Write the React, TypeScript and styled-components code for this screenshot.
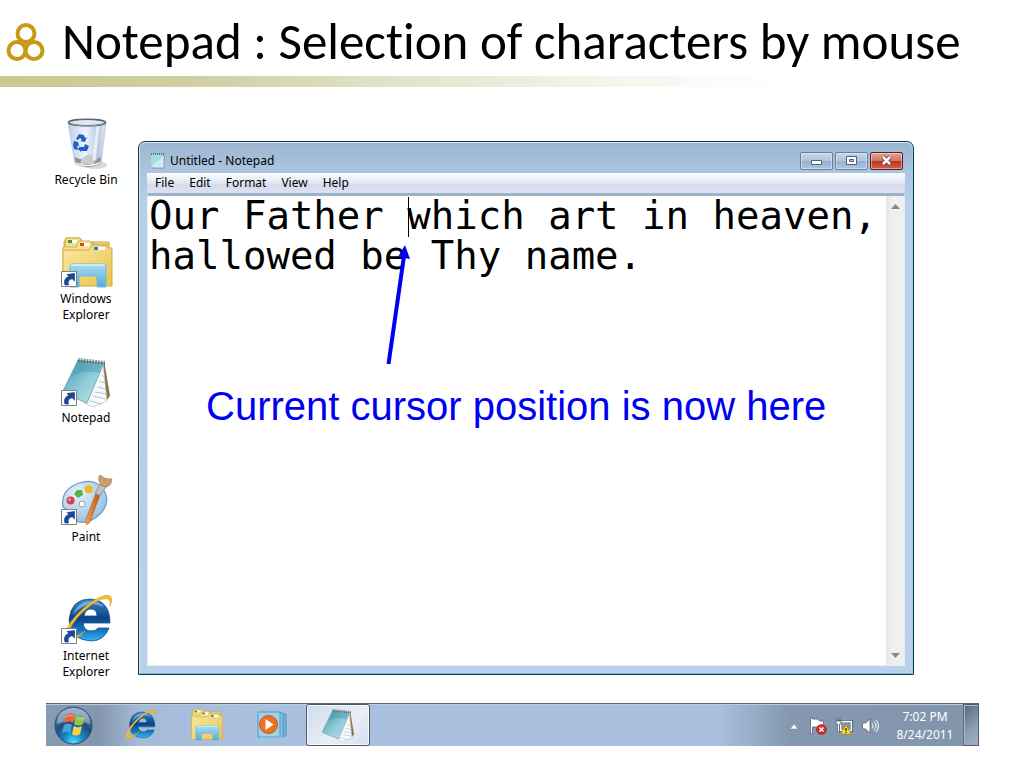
import React from "react";
import styled, { createGlobalStyle, css } from "styled-components";

const GlobalStyle = createGlobalStyle`
  *, *::before, *::after { box-sizing: border-box; }
  body { margin: 0; background: #fff; color: #000; font-family: "Noto Sans", "Open Sans", sans-serif; font-size: 12px; line-height: 16px; }
  button, textarea { font: inherit; color: inherit; margin: 0; }
  svg { display: block; flex: none; }
`;

const Slide = styled.main`
  display: flex;
  flex-direction: column;
`;

const Header = styled.header`
  display: flex;
  align-items: center;
  height: 76px;
  padding: 8px 6px 0;
  gap: 16px;
`;

const Title = styled.h1`
  margin: 0;
  font-family: Carlito, Calibri, "Noto Sans", sans-serif;
  font-size: 51px;
  line-height: 56px;
  font-weight: 400;
  font-variant-ligatures: none;
  white-space: nowrap;
`;

const Rule = styled.div`
  height: 11px;
  background: linear-gradient(90deg, #c9c88f 0%, #d0d0a4 20%, #e6e6d0 42%, #f7f7f0 62%, #fff 77%);
`;

const Desktop = styled.section`
  display: grid;
  grid-template-columns: 80px 1fr;
  column-gap: 12px;
  align-items: start;
  padding: 30px 110px 24px 46px;
`;

const Shortcuts = styled.nav`
  display: grid;
  grid-auto-rows: 119px;
  height: 562px;
`;

const Shortcut = styled.a`
  display: flex;
  flex-direction: column;
  align-items: center;
  gap: 1px;
  color: #000;
  text-align: center;
  text-decoration: none;
  span { max-width: 70px; }
`;

const Window = styled.section`
  position: relative;
  margin-top: 24px;
  padding: 0 8px 8px;
  border: 1px solid #143a48;
  border-radius: 7px 7px 0 0;
  background: linear-gradient(180deg, #9bb4d0 0, #aac3df 26px, #b5d0ea 60px, #b9d1ea 100%);
  box-shadow: inset 0 1px #dbe7f3, inset 1px 0 #c3e2f2, inset -1px 0 #8fd5e4, inset 0 -1px #70bfd2;
`;

const TitleBar = styled.div`
  display: flex;
  align-items: center;
  height: 31px;
  padding: 6px 2px 0 3px;
`;

const WindowName = styled.h2`
  flex: 1;
  margin: 0 0 0 4px;
  font-size: 12px;
  line-height: 16px;
  font-weight: 400;
`;

const Controls = styled.div`
  display: flex;
  gap: 2px;
`;

const Control = styled.button<{ $close?: boolean }>`
  display: flex;
  align-items: center;
  justify-content: center;
  width: 33px;
  height: 18px;
  padding: 0;
  border: 1px solid ${(p) => (p.$close ? "#5c1f24" : "#6a7f9a")};
  border-radius: 2px;
  box-shadow: inset 0 0 0 1px rgba(255, 255, 255, 0.4);
  background: ${(p) =>
    p.$close
      ? "linear-gradient(180deg, #e3a597 0%, #d2735f 48%, #b8331d 50%, #d0624a 100%)"
      : "linear-gradient(180deg, #c3d5e9 0%, #b0c6df 48%, #96b0cf 50%, #adc4de 100%)"};
`;

const MenuBar = styled.div`
  display: flex;
  height: 20px;
  padding: 0 1px;
  background: linear-gradient(180deg, #fbfcfe 0%, #e6e9f5 45%, #d6dbec 60%, #dde2f1 100%);
`;

const MenuItem = styled.button`
  padding: 0 8px 0 7px;
  border: 0;
  background: none;
  line-height: 20px;
`;

const Editor = styled.div`
  position: relative;
  display: flex;
  height: 473px;
  border: 1px solid #e8eef6;
  border-top: 3px solid #9db1c9;
  background: #fff;
`;

const Page = styled.textarea`
  flex: 1;
  min-width: 0;
  padding: 0 0 0 1px;
  border: 0;
  outline: 0;
  resize: none;
  overflow: hidden;
  background: none;
  font-family: "DejaVu Sans Mono", monospace;
  font-size: 39px;
  line-height: 40px;
`;

const ScrollTrack = styled.div`
  display: flex;
  flex-direction: column;
  justify-content: space-between;
  width: 18px;
  background: linear-gradient(90deg, #e6e6e6, #f0f0f0 40%, #efefef);
`;

const ScrollButton = styled.button`
  display: flex;
  align-items: center;
  justify-content: center;
  height: 20px;
  padding: 0;
  border: 0;
  background: none;
`;

const Caret = styled.i`
  position: absolute;
  left: 260px;
  top: 1px;
  width: 1px;
  height: 40px;
  background: #000;
`;

const Arrow = styled.svg`
  position: absolute;
  left: 230px;
  top: 47px;
`;

const Note = styled.p`
  position: absolute;
  left: 58px;
  top: 186px;
  margin: 0;
  color: #0000f0;
  font-family: "Liberation Sans", Arial, sans-serif;
  font-size: 40px;
  line-height: 48px;
  white-space: nowrap;
`;

const Taskbar = styled.footer`
  display: flex;
  align-items: stretch;
  height: 43px;
  margin: 0 45px 22px 46px;
  padding-left: 7px;
  border-top: 1px solid #596879;
  box-shadow: inset 0 1px #b9cbe0;
  background: linear-gradient(90deg, #899bb3 0, #8496af 54px, #a4bbd8 92px, #a9c1df 200px, #a9c1df calc(100% - 262px), #8598b0 calc(100% - 190px), #8195ac 100%);
`;

const pressed = css`
  border: 1px solid #4d5867;
  border-radius: 3px;
  box-shadow: inset 0 0 0 1px rgba(255, 255, 255, 0.8);
  background: linear-gradient(135deg, #d0dceb, #e9eef6 60%, #d4dfed);
`;

const TaskButton = styled.button<{ $active?: boolean }>`
  display: flex;
  align-items: center;
  justify-content: center;
  width: 64px;
  margin-right: 2px;
  padding: 0;
  border: 0;
  background: none;
  ${(p) => p.$active && pressed}
`;

const StartButton = styled.button`
  display: flex;
  align-items: center;
  width: 55px;
  padding: 0;
  border: 0;
  background: none;
`;

const Tray = styled.div`
  display: flex;
  align-items: center;
  gap: 8px;
  margin-left: auto;
  padding-top: 2px;
  color: #fff;
`;

const TrayButton = styled.button`
  padding: 0;
  border: 0;
  background: none;
`;

const Clock = styled.time`
  width: 74px;
  margin: 0 1px 0 1px;
  line-height: 18px;
  text-align: center;
`;

const ShowDesktop = styled.button`
  width: 16px;
  padding: 0;
  border: 1px solid #4e5d70;
  border-left-color: #5c6c80;
  box-shadow: inset 1px 1px #a8b7c8;
  background: linear-gradient(135deg, #57677a, #8d9fb4 60%, #a4b4c6);
`;

const ShortcutBadge = () => (
  <g transform="translate(5 35)">
    <path d="M.5.5h15v15H.5z" fill="#fff" stroke="#7d8186" />
    <path d="M4 14C2.500 9.500 4.500 6.500 8 5.500L6 3.500 13.500 2.500V10l-2.300-2.200C8 8.500 6.500 10.500 7.500 14z" fill="#17489c" stroke="#0d2f74" strokeWidth=".6" />
  </g>
);

const RecycleArt = () => (
  <>
    <defs>
      <linearGradient id="bin" x1="0" x2="1">
        <stop offset="0" stopColor="#b9cfe8" />
        <stop offset=".45" stopColor="#edf5fd" />
        <stop offset=".8" stopColor="#b7c9df" />
        <stop offset="1" stopColor="#e4ebf4" />
      </linearGradient>
    </defs>
    <ellipse cx="39" cy="48" rx="12" ry="4" fill="#c9c9c9" opacity=".7" />
    <path d="M12 5h38l-5 42q-13 6-26 0z" fill="url(#bin)" stroke="#b3bfcd" strokeWidth=".7" />
    <path d="M18.500 40q12 6 26.500 0l-1 7q-12 6-24.500 0z" fill="#8d939a" />
    <path d="M26 41l7-4 9 4-5 6H24z" fill="#c9cdd2" />
    <path d="M19 46q12 5 25 0" fill="none" stroke="#f1f1f1" strokeWidth="1.500" />
    <path d="M42 9l-4 34" stroke="#fff" strokeWidth="3" opacity=".65" />
    <ellipse cx="31" cy="5.500" rx="18.500" ry="3.200" fill="#dfe8f1" stroke="#59656f" strokeWidth="1.500" />
    <path d="M15 7q16 4 32 0" fill="none" stroke="#8d9aa5" />
    <g fill="#245fc3">
      <path d="M20 22l3-5 5 1 1 3 2-1-2 5-5-1 2-1-2-2-2 2z" />
      <path d="M18 24l4 1 1 4-2 0 1 4-4-1-1-4z" />
      <path d="M23 30l5 0 1-3 4 2-2 5-6 0v1l-3-3 2-3z" />
    </g>
  </>
);

const FolderArt = ({ badge }: { badge?: boolean }) => (
  <>
    <defs>
      <linearGradient id={badge ? "fold" : "foldS"} x1="0" y1="0" x2="1" y2="1">
        <stop offset="0" stopColor="#faeaa0" />
        <stop offset="1" stopColor="#e6c44e" />
      </linearGradient>
      <linearGradient id={badge ? "tray" : "trayS"} x1="0" y1="0" x2="0" y2="1">
        <stop offset="0" stopColor="#a9dcf2" />
        <stop offset="1" stopColor="#54add8" />
      </linearGradient>
    </defs>
    <path d="M8 46V6l2-4h14l3 4h26v38z" fill="#eed57b" stroke="#cba94a" />
    <path d="M9 10l1-8h14l2 5h11l2 5h14v34H9z" fill="#f5e08d" stroke="#c8a449" strokeWidth=".8" />
    <path d="M12 4h9v3h-9z" fill="#fff" /><path d="M12 4h4v3h-4z" fill="#3d9b3c" />
    <path d="M7 11h14V7l2-2h11l3 4h16v37H7z" fill="#f7e390" stroke="#c8a449" strokeWidth=".8" />
    <path d="M24 7h9v3h-9z" fill="#fff" /><path d="M24 7h4v3h-4z" fill="#cf4535" />
    <path d="M7 14h26l3-5h14l2 3h4v38H7z" fill={`url(#${badge ? "fold" : "foldS"})`} stroke="#cfa943" />
    <path d="M38 11h11v3H38z" fill="#fff" /><path d="M38 11h4v3h-4z" fill="#3479bb" />
    <path d="M14 30q0-2 2-2h32q2 0 2 2v21h-9V40H23v11h-9z" fill={`url(#${badge ? "tray" : "trayS"})`} stroke="#72b8d8" />
    <path d="M15 29h34" stroke="#d8f3ff" strokeWidth="2" opacity=".8" />
  </>
);

const NotepadArt = ({ id }: { id: string }) => (
  <>
    <defs>
      <linearGradient id={id} x1="0" y1="0" x2="1" y2="1">
        <stop offset="0" stopColor="#4597ab" />
        <stop offset=".55" stopColor="#8fcdd8" />
        <stop offset="1" stopColor="#c4e5ea" />
      </linearGradient>
    </defs>
    <path d="M48 5l6 36-4 5-6-9z" fill="#8b7141" />
    <path d="M47 8l4 38-14 6-9-4z" fill="#f8fafb" stroke="#b7bfc5" strokeWidth=".7" />
    <path d="M46 20l2 2m-5 4 6 2m-8 4 9 2m-11 3 11 2m-13 2 13 3m-16 2 12 3" stroke="#a4b4c2" strokeWidth=".8" />
    <path d="M22 5l26 3L31 48 6 38z" fill={`url(#${id})`} stroke="#6f9faa" strokeWidth=".8" />
    <path d="M22 7l24 3-3 8Q27 14 15 22z" fill="#3d8fa7" opacity=".4" />
    <path d="M22 5l27 3" stroke="#555e60" strokeWidth="4" strokeDasharray="1.500 1.400" />
    <path d="M22 4l27 3" stroke="#bdc5c6" strokeWidth="1" />
  </>
);

const PaintArt = () => (
  <>
    <defs>
      <radialGradient id="palette" cx=".35" cy=".3" r=".8">
        <stop offset="0" stopColor="#e5f2fc" />
        <stop offset="1" stopColor="#91badf" />
      </radialGradient>
      <linearGradient id="handle" x1="0" x2="1">
        <stop offset="0" stopColor="#f4a04e" />
        <stop offset="1" stopColor="#b95517" />
      </linearGradient>
    </defs>
    <path d="M7 33Q4 16 23 9q16-5 24 6 9 13-3 25-10 10-22 8-3-9-15-15z" fill="url(#palette)" stroke="#6f9ac2" strokeWidth="1.200" />
    <circle cx="26" cy="30" r="3" fill="#fff" stroke="#8aa7c0" />
    <circle cx="14.500" cy="26.500" r="4" fill="#cf4248" /><circle cx="13.500" cy="25.500" r="1.500" fill="#f29a99" />
    <path d="M18 20l3-4 5 0 1 5-5 3z" fill="#58b246" />
    <path d="M28 13l4-2 5 2-1 6-6 0z" fill="#f0b72c" />
    <path d="M40 19l4 2L34 48q-3 4-4 2-1-4 1-8z" fill="url(#handle)" stroke="#b3651f" strokeWidth=".5" />
    <path d="M44 10l6 3-6 9-5-3z" fill="#b9c0c7" stroke="#7f868c" strokeWidth=".7" />
    <path d="M45 11Q41 5 44 1q5 5 12 4-1 8-7 8z" fill="#c69c6d" stroke="#a67b4c" strokeWidth=".7" />
    <path d="M46 10l0-6m2 7 4-4" stroke="#dbb98a" strokeWidth=".8" />
  </>
);

const ExplorerArt = ({ id }: { id: string }) => (
  <>
    <defs>
      <linearGradient id={id} x1="0" y1="0" x2="0" y2="1">
        <stop offset="0" stopColor="#3989cb" />
        <stop offset=".45" stopColor="#0d4384" />
        <stop offset=".75" stopColor="#1177c4" />
        <stop offset="1" stopColor="#3cb6ea" />
      </linearGradient>
    </defs>
    <path d="M54 30H27q1 8 8 8 5 0 7-3h11q-5 13-18 13-21-1-22-21Q15 6 34 6q20 1 20 24zM28 23h13q0-7-6-7-6 0-7 7z" fill={`url(#${id})`} stroke="#11508d" strokeWidth=".8" />
    <path d="M17 22q4-13 17-14 9 0 14 6-7-3-12-3-11 1-19 11z" fill="#a9d9f5" opacity=".55" />
    <path d="M14 48Q3 51 10 37 18 21 37 8 52-1 55 4q2 4-1 9 1-6-2-7-5-2-17 6Q18 25 13 38q-3 8 3 7 7-2 13-7-7 8-15 10z" fill="#f5bd32" stroke="#d99b17" strokeWidth=".6" />
  </>
);

const art: Record<string, React.ReactNode> = {
  "Recycle Bin": <RecycleArt />,
  "Windows Explorer": <><FolderArt badge /><ShortcutBadge /></>,
  Notepad: <><NotepadArt id="padL" /><ShortcutBadge /></>,
  Paint: <><PaintArt /><ShortcutBadge /></>,
  "Internet Explorer": <><ExplorerArt id="ieL" /><ShortcutBadge /></>,
};

const Logo = () => (
  <svg width="40" height="40" viewBox="0 0 40 40" fill="none" stroke="#c69a16" strokeWidth="4" aria-hidden="true">
    <circle cx="20" cy="11.500" r="8.500" /><circle cx="11" cy="28.500" r="8.500" /><circle cx="28" cy="28.500" r="8.500" />
  </svg>
);

const StartOrb = () => (
  <svg width="40" height="40" viewBox="0 0 40 40">
    <defs>
      <radialGradient id="orb" cx=".5" cy=".95" r=".9">
        <stop offset="0" stopColor="#4ee0ff" />
        <stop offset=".3" stopColor="#1688c4" />
        <stop offset=".6" stopColor="#1d4f7f" />
        <stop offset="1" stopColor="#7391ad" />
      </radialGradient>
    </defs>
    <circle cx="20.500" cy="20.500" r="18.500" fill="url(#orb)" stroke="#244a69" />
    <path d="M4 19Q4 4 20.500 3 37 4 37 19 21 12 4 19z" fill="#dce9f3" opacity=".42" />
    <path d="M13 10q5-3 9 0l-2 8q-4-3-9 0z" fill="#ec6336" />
    <path d="M23 11q4 3 9 0l-2 8q-5 3-9 0z" fill="#92c83e" />
    <path d="M11 20q4-3 8 0l-2 8q-4-3-8 0z" fill="#4ba2df" />
    <path d="M21 21q4 3 8 0l-2 8q-4 3-8 0z" fill="#fbd03c" />
    <path d="M12 12q4-3 9-1m3 2q3 2 7 0m-11 9q4 2 8 0" fill="none" stroke="#fff" opacity=".4" />
  </svg>
);

const MediaPlayer = () => (
  <svg width="32" height="32" viewBox="0 0 32 32">
    <path d="M10 5h20v22H10z" fill="#77b5d9" stroke="#4a91bd" />
    <path d="M7 4h20v24H7z" fill="#8bc4e5" stroke="#4d93be" />
    <path d="M2 3h22v25H2z" fill="#a2d0eb" stroke="#4d98c5" />
    <path d="M3 28h24" stroke="#6dbce2" strokeWidth="2" />
    <circle cx="12.500" cy="15.500" r="9" fill="#ed721e" stroke="#c65a17" />
    <path d="M9.500 10l8 5.500-8 5.500z" fill="#fff" />
  </svg>
);

const FlagIcon = () => (
  <svg width="18" height="18" viewBox="0 0 18 18">
    <path d="M1.500 1v16h2V10h7l1 1h3V4h-4L9 2H3.500V1z" fill="#fff" stroke="#56616e" strokeWidth=".8" />
    <circle cx="12.500" cy="12.500" r="5" fill="#d62b2b" stroke="#a11717" strokeWidth=".5" />
    <path d="M10.500 10.500l4 4m0-4-4 4" stroke="#fff" strokeWidth="1.600" />
  </svg>
);

const NetworkIcon = () => (
  <svg width="18" height="18" viewBox="0 0 18 18">
    <path d="M5.500 4.500h11v9h-11z" fill="#8093aa" stroke="#414d5b" strokeWidth="3" />
    <path d="M5.500 4.500h11v9h-11z" fill="#8093aa" stroke="#fff" strokeWidth="1.300" />
    <path d="M2 1v3m3-3v3M1 4h5v3H4.500v8h-2V7H1z" fill="#fff" stroke="#505d6c" strokeWidth=".8" />
    <path d="M11 8l5.500 9h-11z" fill="#ffdb2e" stroke="#b18b00" strokeWidth=".8" />
    <path d="M11 11v3m0 1v1" stroke="#292000" strokeWidth="1.300" />
  </svg>
);

const SpeakerIcon = () => (
  <svg width="18" height="18" viewBox="0 0 18 18">
    <path d="M1.500 6h3L9 2v14l-4.500-4h-3z" fill="#fff" stroke="#566272" strokeWidth=".8" />
    <path d="M11 6.500q2 2.500 0 5M13 4.500q4 4.500 0 9M15 3q5 6 0 12" fill="none" stroke="#e9eff6" strokeWidth="1.100" />
  </svg>
);

const text = "Our Father which art in heaven,\nhallowed be Thy name.";

export default function App() {
  return (
    <>
      <GlobalStyle />
      <Slide>
        <Header>
          <Logo />
          <Title>Notepad : Selection of characters by mouse</Title>
        </Header>
        <Rule />
        <Desktop>
          <Shortcuts aria-label="Desktop">
            {Object.entries(art).map(([name, drawing]) => (
              <Shortcut key={name} href="#">
                <svg width="60" height="54" viewBox="0 0 60 54" aria-hidden="true">{drawing}</svg>
                <span>{name}</span>
              </Shortcut>
            ))}
          </Shortcuts>
          <Window>
            <TitleBar>
              <svg width="16" height="17" viewBox="0 0 16 17" aria-hidden="true">
                <path d="M2 3h12v13H2z" fill="#f5fbfb" stroke="#7897a0" />
                <path d="M1 2h12v13H1z" fill="#a7dce0" />
                <path d="M1 15L13 4v11z" fill="#caeeef" />
                <path d="M1 2h13" stroke="#5c7479" strokeWidth="2" strokeDasharray="1 1" />
              </svg>
              <WindowName>Untitled - Notepad</WindowName>
              <Controls>
                <Control aria-label="Minimize">
                  <svg width="13" height="12"><path d="M1.500 5.500h10v4h-10z" fill="#fff" stroke="#545f70" /></svg>
                </Control>
                <Control aria-label="Maximize">
                  <svg width="13" height="12"><path d="M1.500 1.500h10v8h-10zm3 3v2h4v-2z" fill="#fff" fillRule="evenodd" stroke="#545f70" /></svg>
                </Control>
                <Control $close aria-label="Close">
                  <svg width="13" height="12"><path d="M3 2l7 7m0-7-7 7" stroke="#50353d" strokeWidth="4" /><path d="M3 2l7 7m0-7-7 7" stroke="#fff" strokeWidth="2.500" /></svg>
                </Control>
              </Controls>
            </TitleBar>
            <MenuBar role="menubar">
              {["File", "Edit", "Format", "View", "Help"].map((item) => (
                <MenuItem key={item} role="menuitem">{item}</MenuItem>
              ))}
            </MenuBar>
            <Editor>
              <Page aria-label="Document text" defaultValue={text} spellCheck={false} />
              <ScrollTrack>
                <ScrollButton aria-label="Scroll up"><svg width="9" height="5"><path d="M0 5l4.500-5L9 5z" fill="#888" /></svg></ScrollButton>
                <ScrollButton aria-label="Scroll down"><svg width="9" height="5"><path d="M0 0h9L4.500 5z" fill="#888" /></svg></ScrollButton>
              </ScrollTrack>
              <Caret />
              <Arrow width="40" height="124" viewBox="0 0 40 124" aria-hidden="true">
                <path d="M10.500 121L26 13" stroke="#0000f5" strokeWidth="4" />
                <path d="M27 2l5 14-12-2z" fill="#0000f5" />
              </Arrow>
              <Note>Current cursor position is now here</Note>
            </Editor>
          </Window>
        </Desktop>
        <Taskbar>
          <StartButton aria-label="Start"><StartOrb /></StartButton>
          <TaskButton aria-label="Internet Explorer"><svg width="36" height="36" viewBox="1 0 58 54"><ExplorerArt id="ieS" /></svg></TaskButton>
          <TaskButton aria-label="Windows Explorer"><svg width="38" height="34" viewBox="0 0 60 54"><FolderArt /></svg></TaskButton>
          <TaskButton aria-label="Windows Media Player"><MediaPlayer /></TaskButton>
          <TaskButton $active aria-label="Untitled - Notepad"><svg width="42" height="36" viewBox="0 0 60 54"><NotepadArt id="padS" /></svg></TaskButton>
          <Tray>
            <TrayButton aria-label="Show hidden icons"><svg width="14" height="8"><path d="M3 7l4-5 4 5z" fill="#fff" stroke="#6b7c90" strokeWidth=".5" /></svg></TrayButton>
            <TrayButton aria-label="Action Center"><FlagIcon /></TrayButton>
            <TrayButton aria-label="Network"><NetworkIcon /></TrayButton>
            <TrayButton aria-label="Volume"><SpeakerIcon /></TrayButton>
            <Clock dateTime="2011-08-24T19:02">7:02 PM<br />8/24/2011</Clock>
          </Tray>
          <ShowDesktop aria-label="Show desktop" />
        </Taskbar>
      </Slide>
    </>
  );
}
